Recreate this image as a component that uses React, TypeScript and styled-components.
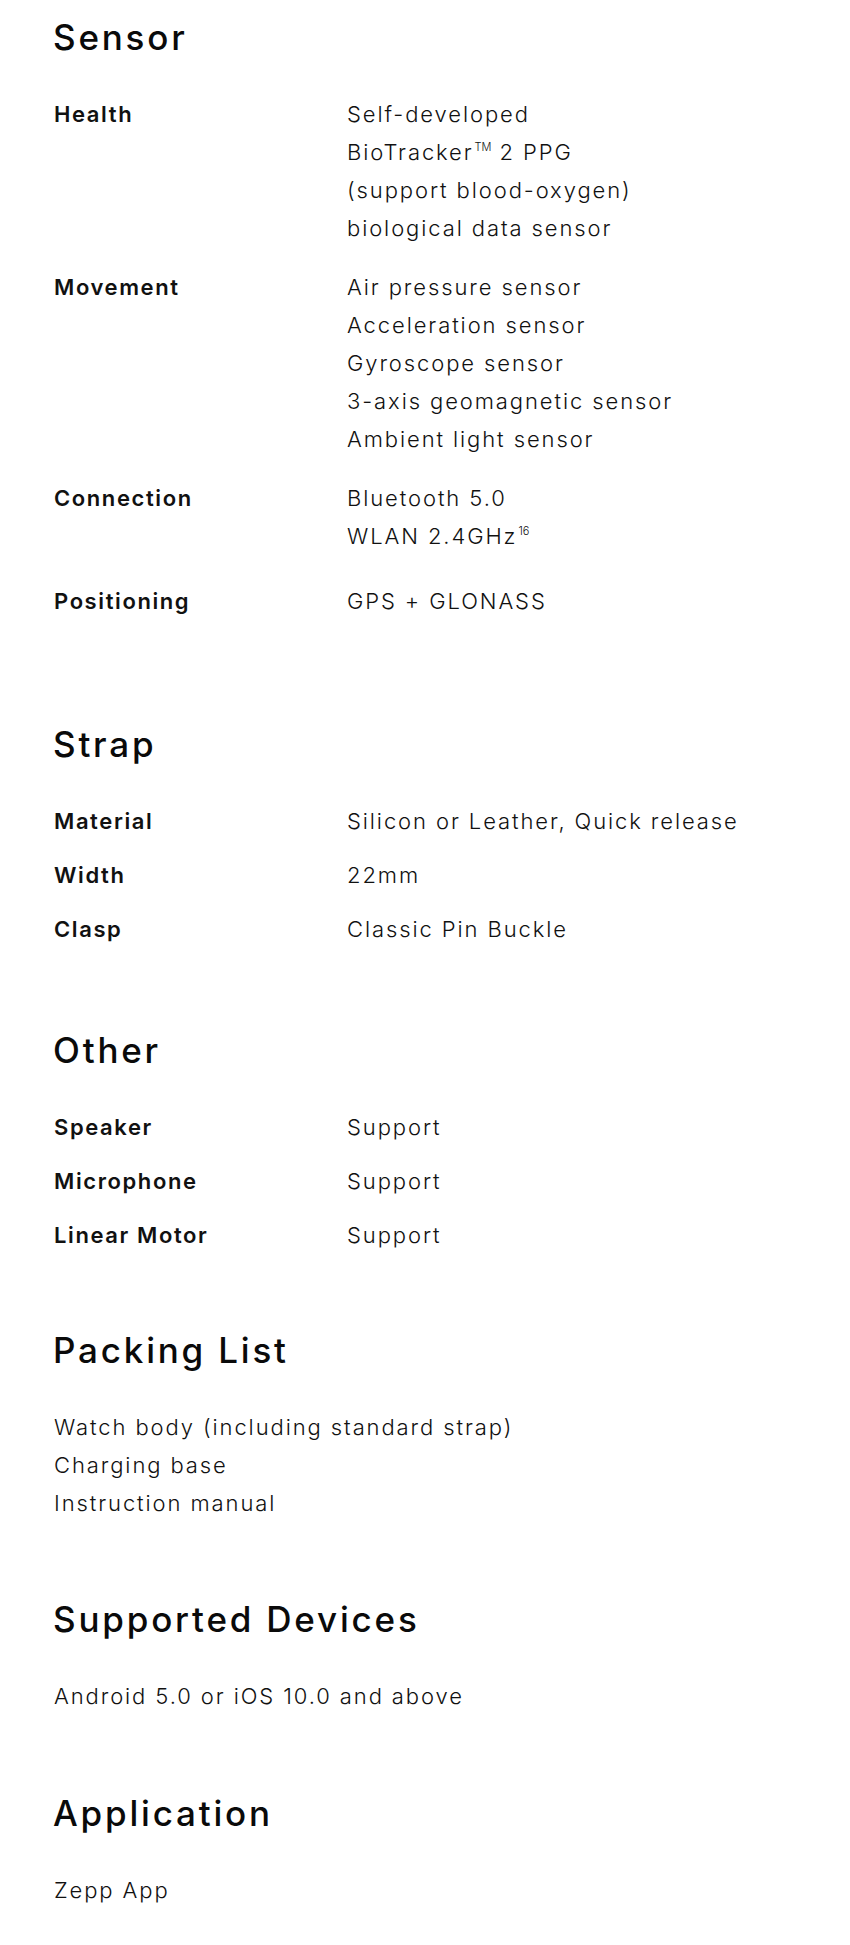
import React from "react";
import styled, { createGlobalStyle } from "styled-components";

const GlobalStyle = createGlobalStyle`
  html, body {
    margin: 0;
    padding: 0;
    background: #fff;
  }
  body {
    font-family: Inter, "Noto Sans", "Liberation Sans", sans-serif;
    color: #111;
    -webkit-font-smoothing: antialiased;
  }
`;

const Page = styled.main`
  width: 850px;
  padding: 17px 0 30px 54px;
  box-sizing: border-box;
`;

const Section = styled.section<{ spaceAfter: number }>`
  margin-bottom: ${({ spaceAfter }) => spaceAfter}px;
  &:last-child {
    margin-bottom: 0;
  }
`;

const Heading = styled.h2`
  margin: 0 0 38px -1px;
  font-size: 35px;
  line-height: 40px;
  font-weight: 500;
  letter-spacing: 2.8px;
  color: #0a0a0a;
`;

const SpecList = styled.div<{ rowGap: number }>`
  display: flex;
  flex-direction: column;
  gap: ${({ rowGap }) => rowGap}px;
`;

const SpecRow = styled.div<{ extra?: number }>`
  display: grid;
  grid-template-columns: 293px 1fr;
  margin-top: ${({ extra }) => extra ?? 0}px;
`;

const Label = styled.div`
  font-size: 22px;
  line-height: 38px;
  font-weight: 560;
  letter-spacing: 1.6px;
  color: #111;
`;

const Values = styled.div<{ offset?: number }>`
  display: flex;
  flex-direction: column;
  margin-top: ${({ offset }) => offset ?? 0}px;
`;

const Line = styled.div`
  font-size: 22px;
  line-height: 38px;
  font-weight: 340;
  letter-spacing: 1.9px;
  color: #111;
  white-space: nowrap;
`;

const Mark = styled.sup`
  font-size: 11px;
  line-height: 0;
  letter-spacing: 0;
  vertical-align: 9px;
  margin-left: 1px;
`;

type Spec = { label: string; values: React.ReactNode[]; extra?: number };

const sensor: Spec[] = [
  {
    label: "Health",
    values: [
      "Self-developed",
      <>BioTracker<Mark>TM</Mark> 2 PPG</>,
      "(support blood-oxygen)",
      "biological data sensor",
    ],
  },
  {
    label: "Movement",
    values: [
      "Air pressure sensor",
      "Acceleration sensor",
      "Gyroscope sensor",
      "3-axis geomagnetic sensor",
      "Ambient light sensor",
    ],
  },
  { label: "Connection", values: ["Bluetooth 5.0", <>WLAN 2.4GHz<Mark>16</Mark></>] },
  { label: "Positioning", values: ["GPS + GLONASS"], extra: 6 },
];

const strap: Spec[] = [
  { label: "Material", values: ["Silicon or Leather, Quick release"] },
  { label: "Width", values: ["22mm"] },
  { label: "Clasp", values: ["Classic Pin Buckle"] },
];

const other: Spec[] = [
  { label: "Speaker", values: ["Support"] },
  { label: "Microphone", values: ["Support"] },
  { label: "Linear Motor", values: ["Support"] },
];

const SpecTable = ({ rows, rowGap }: { rows: Spec[]; rowGap: number }) => (
  <SpecList rowGap={rowGap}>
    {rows.map((r) => (
      <SpecRow key={r.label} extra={r.extra}>
        <Label>{r.label}</Label>
        <Values>
          {r.values.map((v, i) => (
            <Line key={i}>{v}</Line>
          ))}
        </Values>
      </SpecRow>
    ))}
  </SpecList>
);

export default function App() {
  return (
    <>
      <GlobalStyle />
      <Page>
        <Section spaceAfter={104}>
          <Heading>Sensor</Heading>
          <SpecTable rows={sensor} rowGap={21} />
        </Section>

        <Section spaceAfter={82}>
          <Heading>Strap</Heading>
          <SpecTable rows={strap} rowGap={16} />
        </Section>

        <Section spaceAfter={76}>
          <Heading>Other</Heading>
          <SpecTable rows={other} rowGap={16} />
        </Section>

        <Section spaceAfter={77}>
          <Heading>Packing List</Heading>
          <Values offset={2}>
            <Line>Watch body (including standard strap)</Line>
            <Line>Charging base</Line>
            <Line>Instruction manual</Line>
          </Values>
        </Section>

        <Section spaceAfter={78}>
          <Heading>Supported Devices</Heading>
          <Line>Android 5.0 or iOS 10.0 and above</Line>
        </Section>

        <Section spaceAfter={0}>
          <Heading>Application</Heading>
          <Line>Zepp App</Line>
        </Section>
      </Page>
    </>
  );
}
